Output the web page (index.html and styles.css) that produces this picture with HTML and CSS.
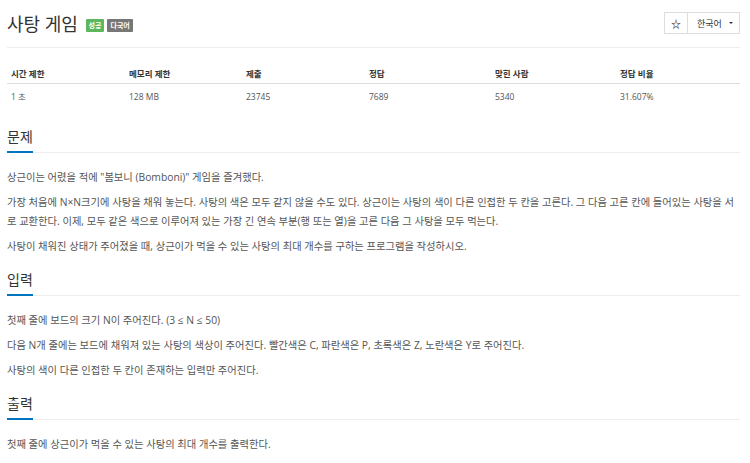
FILE: index.html
```html
<!DOCTYPE html>
<html lang="ko">
<head>
    <meta charset="UTF-8">
    <title>사탕 게임</title>
    <link rel="stylesheet" href="styles.css">
</head>
<body>
    <div class="page">
        <div class="page-header">
            <h1 class="title">사탕 게임 <span class="label label-success">성공</span><span class="label label-default">다국어</span></h1>
            <div class="btn-group">
                <button class="btn btn-star">☆</button>
                <button class="btn btn-lang">한국어 <span class="caret"></span></button>
            </div>
        </div>

        <table class="problem-info">
            <thead>
                <tr>
                    <th>시간 제한</th>
                    <th>메모리 제한</th>
                    <th>제출</th>
                    <th>정답</th>
                    <th>맞힌 사람</th>
                    <th>정답 비율</th>
                </tr>
            </thead>
            <tbody>
                <tr>
                    <td>1 초</td>
                    <td>128 MB</td>
                    <td>23745</td>
                    <td>7689</td>
                    <td>5340</td>
                    <td>31.607%</td>
                </tr>
            </tbody>
        </table>

        <section class="problem-section">
            <div class="headline"><h2>문제</h2></div>
            <p>상근이는 어렸을 적에 "봄보니 (Bomboni)" 게임을 즐겨했다.</p>
            <p>가장 처음에 N×N크기에 사탕을 채워 놓는다. 사탕의 색은 모두 같지 않을 수도 있다. 상근이는 사탕의 색이 다른 인접한 두 칸을 고른다. 그 다음 고른 칸에 들어있는 사탕을 서로 교환한다. 이제, 모두 같은 색으로 이루어져 있는 가장 긴 연속 부분(행 또는 열)을 고른 다음 그 사탕을 모두 먹는다.</p>
            <p>사탕이 채워진 상태가 주어졌을 때, 상근이가 먹을 수 있는 사탕의 최대 개수를 구하는 프로그램을 작성하시오.</p>
        </section>

        <section class="problem-section">
            <div class="headline"><h2>입력</h2></div>
            <p>첫째 줄에 보드의 크기 N이 주어진다. (3 ≤ N ≤ 50)</p>
            <p>다음 N개 줄에는 보드에 채워져 있는 사탕의 색상이 주어진다. 빨간색은 C, 파란색은 P, 초록색은 Z, 노란색은 Y로 주어진다.</p>
            <p>사탕의 색이 다른 인접한 두 칸이 존재하는 입력만 주어진다.</p>
        </section>

        <section class="problem-section">
            <div class="headline"><h2>출력</h2></div>
            <p>첫째 줄에 상근이가 먹을 수 있는 사탕의 최대 개수를 출력한다.</p>
        </section>
    </div>
</body>
</html>
```

FILE: styles.css
```css
* { margin: 0; padding: 0; box-sizing: border-box; }
body {
    font-family: "Open Sans", "Noto Sans CJK KR", sans-serif;
    background: #fff; color: #555;
    font-size: 10px;
}
.page { width: 733px; margin-left: 7px; }

.page-header {
    display: flex; justify-content: space-between; align-items: flex-start;
    height: 48px; border-bottom: 1px solid #eee;
    padding-top: 12px;
}
.title { font-size: 18px; font-weight: normal; color: #333; line-height: 24px; }
.label {
    display: inline-block; vertical-align: 3px;
    font-size: 7px; font-weight: bold; color: #fff;
    line-height: 13px; padding: 0 3px; border-radius: 1px;
    margin-left: 3px;
}
.label-success { background: #5cb85c; }
.label-default { background: #777; }

.btn-group { display: flex; }
.btn {
    font-family: inherit; font-size: 9px; color: #333;
    background: #fff; border: 1px solid #ddd; height: 22px;
    display: flex; align-items: center;
}
.btn-star { width: 24px; justify-content: center; font-size: 10px; font-weight: bold; }
.btn-lang { width: 53px; margin-left: -1px; padding-left: 9px; gap: 7px; }
.caret {
    width: 0; height: 0;
    border-left: 2.5px solid transparent; border-right: 2.5px solid transparent;
    border-top: 2.5px solid #333;
}

.problem-info { width: 100%; border-collapse: collapse; margin-top: 15px; }
.problem-info th, .problem-info td {
    text-align: left; padding: 0 4px; font-size: 8.5px; color: #333;
}
.problem-info th { font-weight: bold; height: 20px; border-bottom: 1px solid #ddd; }
.problem-info td { height: 26px; color: #555; }
.problem-info th:nth-child(1) { width: 118px; }
.problem-info th:nth-child(2) { width: 117px; }
.problem-info th:nth-child(3) { width: 123px; }
.problem-info th:nth-child(4) { width: 126px; }
.problem-info th:nth-child(5) { width: 125px; }

.problem-section { margin-top: 14px; }
.problem-info + .problem-section { margin-top: 18px; }
.headline { border-bottom: 1px solid #eee; margin-bottom: 15px; }
.headline h2 {
    display: inline-block; font-size: 14px; font-weight: normal; color: #333;
    line-height: 20px; padding-bottom: 4px;
    border-bottom: 2px solid #0076c0; margin-bottom: -1px;
}
.problem-section p { font-size: 10.3px; line-height: 19px; margin-bottom: 6px; }
```
